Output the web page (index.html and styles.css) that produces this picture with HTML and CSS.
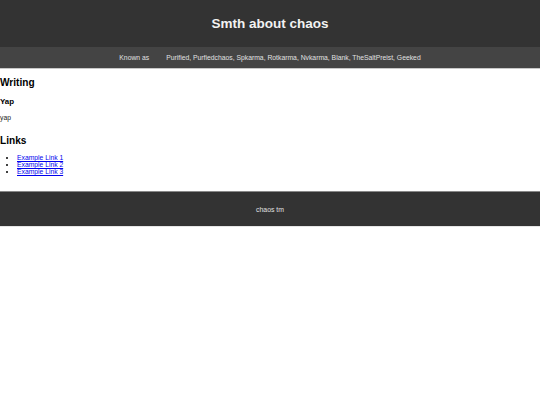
FILE: index.html
```html
<!DOCTYPE html>
<html>
<head>
<meta charset="utf-8">
<title>Smth about chaos</title>
<link rel="stylesheet" href="styles.css">
</head>
<body>
<header class="site-header">
  <h1 class="site-title">Smth about chaos</h1>
</header>
<nav class="aliases">
  <span class="aliases-label">Known as</span>
  <span class="aliases-list">Purified, Purfiedchaos, Spkarma, Rotkarma, Nvkarma, Blank, TheSaltPreist, Geeked</span>
</nav>
<main class="content">
  <section class="section">
    <h2 class="section-title">Writing</h2>
    <h3 class="post-title">Yap</h3>
    <p class="post-body">yap</p>
  </section>
  <section class="section">
    <h2 class="section-title">Links</h2>
    <ul class="link-list">
      <li><a href="#">Example Link 1</a></li>
      <li><a href="#">Example Link 2</a></li>
      <li><a href="#">Example Link 3</a></li>
    </ul>
  </section>
</main>
<footer class="site-footer">
  <p class="footer-text">chaos tm</p>
</footer>
</body>
</html>
```

FILE: styles.css
```css
html, body {
  margin: 0;
  padding: 0;
  background: #ffffff;
}

body {
  font-family: "Liberation Sans", Arial, sans-serif;
  font-size: 6.75px;
  color: #000000;
}

.site-header {
  background: #333333;
  height: 47px;
  display: flex;
  align-items: center;
  justify-content: center;
}

.site-title {
  margin: 0;
  font-size: 13.5px;
  font-weight: bold;
  color: #f2f2f2;
}

.aliases {
  background: #444444;
  height: 21px;
  display: flex;
  align-items: center;
  justify-content: center;
  gap: 17px;
  font-size: 6.8px;
  color: #e0e0e0;
  border-bottom: 1px solid #c8c8c8;
}

.content {
  padding-bottom: 9px;
}

.section + .section {
  margin-top: 14.4px;
}

.section-title {
  font-size: 10.1px;
  margin: 8.4px 0;
}

.post-title {
  font-size: 7.9px;
  margin: 7.9px 0;
}

.post-body {
  margin: 6.75px 0;
  color: #222222;
}

.link-list {
  margin: 6.75px 0;
  padding-left: 17px;
}

.link-list a {
  color: #0000ee;
  text-decoration-thickness: 0.5px;
}

.site-footer {
  background: #333333;
  border-top: 1px solid #888888;
  border-bottom: 1px solid #e6e6e6;
  height: 34px;
  display: flex;
  align-items: center;
  justify-content: center;
}

.footer-text {
  margin: 0;
  color: #e0e0e0;
  font-size: 6.9px;
}
```
